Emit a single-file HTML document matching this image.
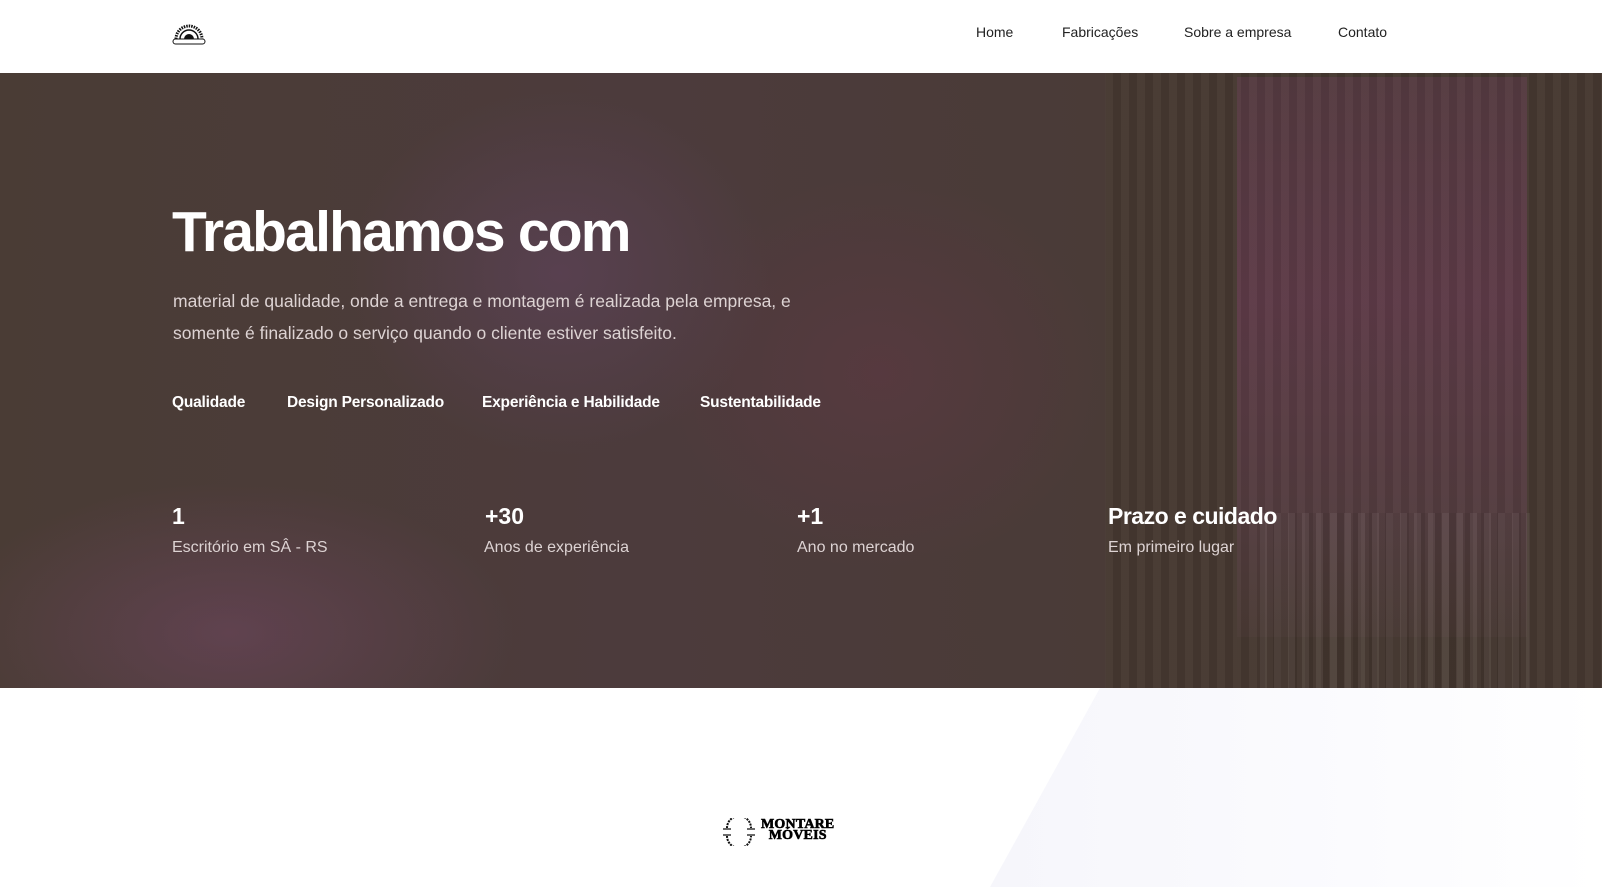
<!DOCTYPE html>
<html><head><meta charset="utf-8"><style>
*{margin:0;padding:0;box-sizing:border-box}
body{width:1602px;height:887px;overflow:hidden;background:#fff;font-family:"Liberation Sans",sans-serif;position:relative}
header{position:absolute;top:0;left:0;width:1602px;height:73px;background:#fff}
nav a{position:absolute;top:24px;font-size:14px;color:#222;text-decoration:none}
.hero{position:absolute;top:73px;left:0;width:1602px;height:615px;overflow:hidden;
background:
radial-gradient(ellipse 300px 260px at 560px 200px,rgba(100,70,100,.5),transparent 70%),
radial-gradient(ellipse 380px 200px at 230px 560px,rgba(110,70,95,.6),transparent 75%),
radial-gradient(ellipse 300px 260px at 880px 300px,rgba(100,55,70,.45),transparent 75%),
linear-gradient(90deg,#4a3c35 0%,#4c3b3c 40%,#4a3b37 69%,#463830 69%,#463830 100%)}
.panel{position:absolute;left:1237px;top:4px;width:290px;height:560px;background:linear-gradient(180deg,#543a40,#5d3a47 40%,#523c3e 80%,#4a3a34)}
.stripes{position:absolute;left:1105px;top:0;width:497px;height:615px;background:repeating-linear-gradient(90deg,rgba(255,255,255,.025) 0 8px,rgba(0,0,0,.05) 8px 16px)}
.stripes2{position:absolute;left:1260px;top:440px;width:270px;height:175px;background:repeating-linear-gradient(90deg,rgba(255,255,255,.05) 0 7px,rgba(0,0,0,.06) 7px 14px)}
.h1{position:absolute;left:172px;top:199px;font-size:57px;font-weight:bold;color:#fff;letter-spacing:-1.8px}
.p{position:absolute;left:173px;top:286px;font-size:17.5px;line-height:31.7px;color:#ddd3d3;width:650px}
.f{position:absolute;top:394px;font-size:15.5px;font-weight:bold;color:#fff;letter-spacing:-.2px}
.n{position:absolute;top:503px;font-size:23px;font-weight:bold;color:#fff}
.s{position:absolute;top:539px;font-size:16px;color:#ddd3d3}
.light{position:absolute;left:990px;top:688px;width:612px;height:199px;background:linear-gradient(90deg,#f6f6fb,#fbfbfe 60%,#fff);clip-path:polygon(110px 0,612px 0,612px 199px,0 199px)}
</style></head><body>
<header>
<svg style="position:absolute;left:172px;top:21px" width="34" height="24" viewBox="0 0 34 24"><path d="M4 18 A13 13 0 0 1 30 18" fill="none" stroke="#111" stroke-width="3" stroke-dasharray="1.5 1"/><path d="M8 18 A9 9 0 0 1 26 18" fill="none" stroke="#111" stroke-width="1.5"/><path d="M12 18 A5 5 0 0 1 22 18Z" fill="#111"/><rect x="1" y="18" width="32" height="5" rx="2.5" fill="#fff" stroke="#111" stroke-width="1"/></svg>
<nav><a style="left:976px">Home</a><a style="left:1062px">Fabricações</a><a style="left:1184px">Sobre a empresa</a><a style="left:1338px">Contato</a></nav>
</header>
<div class="hero"><div class="panel"></div><div class="stripes"></div><div class="stripes2"></div></div>
<div class="h1">Trabalhamos com</div>
<div class="p">material de qualidade, onde a entrega e montagem é realizada pela empresa, e somente é finalizado o serviço quando o cliente estiver satisfeito.</div>
<div class="f" style="left:172px">Qualidade</div>
<div class="f" style="left:287px">Design Personalizado</div>
<div class="f" style="left:482px">Experiência e Habilidade</div>
<div class="f" style="left:700px">Sustentabilidade</div>
<div class="n" style="left:172px">1</div><div class="s" style="left:172px">Escritório em SÂ - RS</div>
<div class="n" style="left:485px">+30</div><div class="s" style="left:484px">Anos de experiência</div>
<div class="n" style="left:797px">+1</div><div class="s" style="left:797px">Ano no mercado</div>
<div class="n" style="left:1108px;letter-spacing:-.5px">Prazo e cuidado</div><div class="s" style="left:1108px">Em primeiro lugar</div>
<div class="light"></div>
<svg style="position:absolute;left:722px;top:818px" width="34" height="28" viewBox="0 0 34 28"><path d="M5 10 A12 12 0 0 1 29 10" fill="none" stroke="#111" stroke-width="2" stroke-dasharray="2 1"/><path d="M5 18 A12 12 0 0 0 29 18" fill="none" stroke="#111" stroke-width="2" stroke-dasharray="2 1"/><path d="M1 11h8M25 11h8M1 17h8M25 17h8" stroke="#111" stroke-width="1.2"/></svg>
<div style="position:absolute;left:761px;top:819px;font-family:'Liberation Serif',serif;font-weight:bold;font-size:14px;line-height:11px;color:#000;text-align:center;letter-spacing:.2px;-webkit-text-stroke:.6px #000">MONTARE<br>MÓVEIS</div>
</body></html>
